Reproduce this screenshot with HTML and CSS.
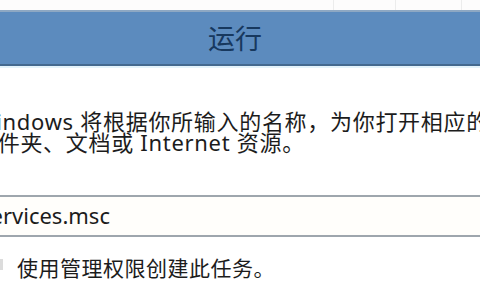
FILE: index.html
```html
<!DOCTYPE html>
<html lang="zh-CN">
<head>
    <meta charset="UTF-8">
    <title>运行</title>
    <link rel="stylesheet" href="styles.css">
</head>
<body>
    <div class="backdrop">
        <div class="backdrop-gap"></div>
        <div class="backdrop-cell cell-a"></div>
        <div class="backdrop-cell cell-b"></div>
        <div class="backdrop-cell cell-c"></div>
    </div>

    <div class="dialog">
        <div class="titlebar">
            <span class="title">运行</span>
        </div>

        <div class="content">
            <p class="message">
                <span class="line">Windows 将根据你所输入的名称，为你打开相应的程序、</span>
                <span class="line">文件夹、文档或 Internet 资源。</span>
            </p>

            <div class="open-box">
                <span class="open-value">services.msc</span>
            </div>

            <div class="admin-row">
                <span class="admin-mark"></span>
                <span class="admin-text">使用管理权限创建此任务。</span>
            </div>
        </div>
    </div>
</body>
</html>
```

FILE: styles.css
```css
* {
    margin: 0;
    padding: 0;
    box-sizing: border-box;
}

html, body {
    width: 480px;
    height: 300px;
    overflow: hidden;
    background: #ffffff;
}

body {
    font-family: "Noto Sans", "Noto Sans CJK SC", sans-serif;
    color: #1c1c1c;
}

/* window behind the dialog */
.backdrop {
    display: flex;
    height: 10px;
    background: #fdfcfc;
}

.backdrop-gap {
    width: 333px;
}

.backdrop-cell {
    border-left: 1px solid #ececec;
}

.cell-a { width: 62px; }
.cell-b { width: 66px; }
.cell-c { flex: 1; }

/* title bar */
.titlebar {
    height: 56px;
    display: flex;
    align-items: center;
    justify-content: center;
    padding-right: 10px;
    background: #5c8bbe;
    border-top: 2px solid #8ea8c3;
    border-bottom: 2px solid #44698f;
    box-shadow: 0 2px 0 #e4f3fb;
}

.title {
    font-family: "Noto Sans CJK SC", sans-serif;
    font-size: 27px;
    line-height: 30px;
    color: #17385e;
}

/* body */
.content {
    padding-top: 45px;
}

.message {
    margin-left: -25px;
    font-size: 22px;
    line-height: 21px;
    letter-spacing: 0.7px;
    white-space: nowrap;
}

.line {
    display: block;
}

.open-box {
    margin: 42px -20px 0 -20px;
    height: 42px;
    display: flex;
    align-items: center;
    background: #fffefb;
    border-top: 2px solid #9ea6ad;
    border-bottom: 2px solid #9ea6ad;
}

.open-value {
    margin-top: -2px;
    font-size: 22px;
}

.admin-row {
    display: flex;
    align-items: center;
    margin-top: 20px;
    height: 22px;
}

.admin-mark {
    width: 3px;
    height: 11px;
    margin-right: 14px;
    margin-top: -8px;
    background: #dcdcdc;
}

.admin-text {
    font-size: 21px;
    line-height: 22px;
    letter-spacing: 0.5px;
}
```
